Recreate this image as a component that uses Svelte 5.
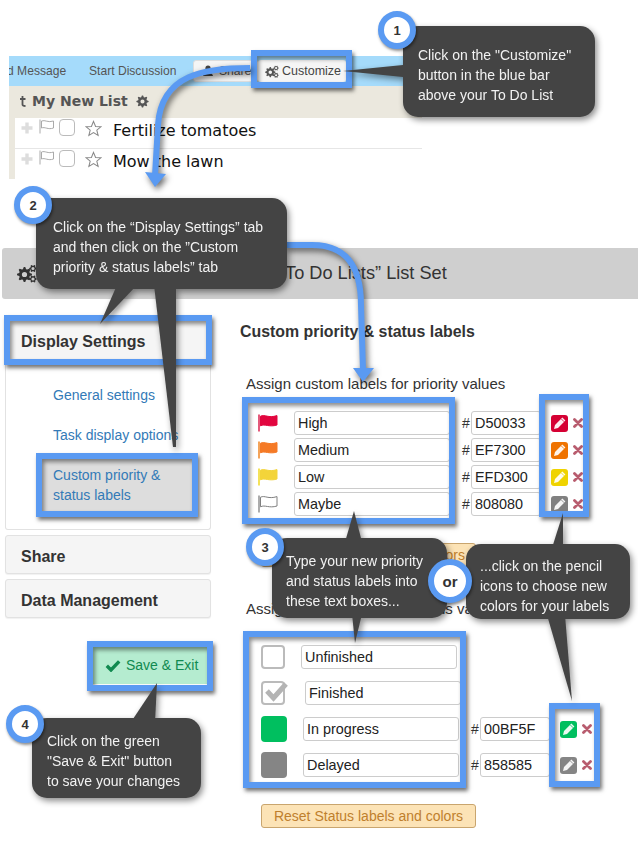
<script>
	const priorities = [
		{ label: 'High', hex: 'D50033', color: '#d50033', fill: '#e2063f' },
		{ label: 'Medium', hex: 'EF7300', color: '#ef7300', fill: '#f57a26' },
		{ label: 'Low', hex: 'EFD300', color: '#efd300', fill: '#f3d43a' },
		{ label: 'Maybe', hex: '808080', color: '#808080', fill: 'none' }
	];
	const statuses = [
		{ label: 'Unfinished', kind: 'empty', shift: 'none' },
		{ label: 'Finished', kind: 'done', shift: 'far' },
		{ label: 'In progress', kind: 'green', shift: 'near', hex: '00BF5F', color: '#00bf5f' },
		{ label: 'Delayed', kind: 'gray', shift: 'near', hex: '858585', color: '#858585' }
	];
	const notes = [
		{ id: 'n1', lines: ['Click on the "Customize"', 'button in the blue bar', 'above your To Do List'] },
		{ id: 'n2', lines: ['Click on the “Display Settings” tab', 'and then click on the ”Custom', 'priority & status labels” tab'] },
		{ id: 'n3', lines: ['Type your new priority', 'and status labels into', 'these text boxes...'] },
		{ id: 'n3b', lines: ['...click on the pencil', 'icons to choose new', 'colors for your labels'] },
		{ id: 'n4', lines: ['Click on the green', '"Save & Exit" button', 'to save your changes'] }
	];
	const tails = [
		'403,65 403,77 343,71',
		'117,285 100,324 137,285',
		'154,285 173,447 176,447 176,285',
		'354,511 345,542 362,542',
		'352,614 362,614 355,643',
		'563,513 552,548 563,548',
		'547,615 565,615 572,701',
		'157,683 131,722 155,722'
	];

	// toothed wheel with a hole, used for the cog icons
	function gear(cx, cy, r, teeth, hole) {
		let d = '';
		const n = teeth * 4;
		for (let i = 0; i < n; i++) {
			const a = ((i - 0.5) / n) * Math.PI * 2;
			const rad = i % 4 < 2 ? r : r * 0.74;
			d += (i ? 'L' : 'M') + (cx + Math.cos(a) * rad).toFixed(2) + ' ' + (cy + Math.sin(a) * rad).toFixed(2);
		}
		d += 'Z';
		d += `M${cx - hole} ${cy}a${hole} ${hole} 0 1 0 ${hole * 2} 0a${hole} ${hole} 0 1 0 ${-hole * 2} 0Z`;
		return d;
	}
</script>

{#snippet cogs(cls)}
	<svg class={cls} viewBox="0 0 20 19">
		<path fill="currentColor" fill-rule="evenodd" d={gear(7.5, 10.5, 7.5, 8, 2.6)} />
		<path fill="currentColor" fill-rule="evenodd" d={gear(16, 4.5, 3.8, 6, 1.6)} />
		<path fill="currentColor" fill-rule="evenodd" d={gear(16, 15, 3.8, 6, 1.6)} />
	</svg>
{/snippet}

{#snippet star()}
	<svg class="star" viewBox="0 0 18 18">
		<polygon points="9,1.5 11.2,6.8 16.8,7.2 12.5,10.8 13.9,16.3 9,13.3 4.1,16.3 5.5,10.8 1.2,7.2 6.8,6.8" fill="#fff" stroke="#888" stroke-width="1.1" />
	</svg>
{/snippet}

{#snippet tool(color)}
	<span class="pencil" style="background: {color}">
		<svg viewBox="0 0 14 14">
			<path d="M1 13 L2 9 L9.4 1.6 L12.4 4.6 L5 12 Z" fill="#fff" fill-opacity="0.92" />
			<path d="M8.2 2.8 L11.2 5.8" stroke={color} stroke-width="0.8" />
		</svg>
	</span>
	<svg class="cross" viewBox="0 0 10 10">
		<path d="M1.5 1.5 L8.5 8.5 M8.5 1.5 L1.5 8.5" stroke="#b85c6e" stroke-width="2.8" stroke-linecap="round" />
	</svg>
{/snippet}

<div class="canvas">
	<section class="shot">
		<div class="bluebar">
			<span class="cut">d Message</span>
			<span class="start">Start Discussion</span>
			<span class="pill share">
				<svg viewBox="0 0 12 12"><circle cx="6" cy="3.2" r="2.6" fill="#444" /><path d="M1 11 C1 6.5 11 6.5 11 11 Z" fill="#444" /></svg>
				Share
			</span>
			<span class="pill custom">{@render cogs('cog-small')} Customize</span>
		</div>
		<div class="listhead">
			<svg class="sort" viewBox="0 0 8 12"><path d="M3.5 1 V9.5 Q3.5 11 6.5 11 M1 4 H6.5" fill="none" stroke="#555" stroke-width="1.8" /></svg>
			<b>My New List</b>
			<svg class="cog-title" viewBox="0 0 14 14"><path fill="#555" fill-rule="evenodd" d={gear(7, 7, 6.6, 8, 2.2)} /></svg>
		</div>
		{#each ['Fertilize tomatoes', 'Mow the lawn'] as task}
			<div class="task">
				<svg class="plus" viewBox="0 0 12 12"><path d="M6 0.5 V11.5 M0.5 6 H11.5" stroke="#ddd" stroke-width="3.4" /></svg>
				<svg class="miniflag" viewBox="0 0 16 15"><path d="M1 0.5 V14.5 M2.5 2 C6 0.5 9 4 14.5 2 V9 C9 11 6 7.5 2.5 9 Z" fill="none" stroke="#aaa" /></svg>
				<span class="tick"></span>
				{@render star()}
				<span class="taskname">{task}</span>
			</div>
		{/each}
	</section>

	<header class="bar">
		{@render cogs('cog-head')}
		<h1>“To Do Lists” List Set</h1>
	</header>

	<div class="body">
		<aside class="side">
			<div class="tab">Display Settings</div>
			<nav class="tabbody">
				<a href="#general">General settings</a>
				<a href="#task">Task display options</a>
				<a class="active" href="#custom">Custom priority &amp; status labels</a>
			</nav>
			<div class="tab closed">Share</div>
			<div class="tab closed">Data Management</div>
			<button class="save">
				<svg viewBox="0 0 16 13"><path d="M1.8 6.8 L6 11 L14.2 2.3" fill="none" stroke="#118a50" stroke-width="3.4" /></svg>
				Save &amp; Exit
			</button>
		</aside>

		<main class="content">
			<h2>Custom priority &amp; status labels</h2>
			<p class="assign first">Assign custom labels for priority values</p>
			<div class="rows priority">
				{#each priorities as p}
					<div class="row">
						<svg class="flag" viewBox="0 0 20 18">
							<path d="M1 0.5 V17.5" stroke={p.color} stroke-width="1.3" />
							<path d="M2.5 2.2 C7 0 10 4.5 19 1.6 V11 C11 13.5 7 9.5 2.5 11.8 Z" fill={p.fill} stroke={p.fill === 'none' ? p.color : p.fill} />
						</svg>
						<input class="name" value={p.label} />
						<span class="hash">#</span>
						<input class="hex" value={p.hex} />
						{@render tool(p.color)}
					</div>
				{/each}
			</div>
			<button class="reset">Reset Priority labels and colors</button>

			<p class="assign second">Assign custom labels for status values</p>
			<div class="rows status">
				{#each statuses as s}
					<div class="row">
						<span class="box {s.kind}">
							{#if s.kind === 'done'}
								<svg viewBox="0 0 28 24"><path d="M6 11 L12.5 18 L25 4" fill="none" stroke="#b4b4b4" stroke-width="5" /></svg>
							{/if}
						</span>
						<input class="name {s.shift}" value={s.label} />
						{#if s.hex}
							<span class="hash">#</span>
							<input class="hex" value={s.hex} />
							{@render tool(s.color)}
						{/if}
					</div>
				{/each}
			</div>
			<button class="reset">Reset Status labels and colors</button>
		</main>
	</div>

	<div class="ring r-custom"></div>
	<div class="ring r-display"></div>
	<div class="ring r-labels"></div>
	<div class="ring r-names"></div>
	<div class="ring r-tools"></div>
	<div class="ring r-status"></div>
	<div class="ring r-tools2"></div>
	<div class="ring r-save"></div>

	<svg class="overlay arrows" viewBox="0 0 638 853">
		<path d="M250 68 C205 68 161 74 158 125 L155 176" />
		<polygon points="145,172 166,174 155,187" />
		<path d="M285 245 L312 245 C345 245 361 265 361 305 L363 370" />
		<polygon points="353,368 374,368 363,382" />
	</svg>

	<div class="notes">
		<svg class="overlay" viewBox="0 0 638 853">
			{#each tails as points}
				<polygon {points} fill="#444" />
			{/each}
		</svg>
		{#each notes as note}
			<div class="note {note.id}">
				{#each note.lines as line}
					<div>{line}</div>
				{/each}
			</div>
		{/each}
	</div>

	<span class="badge b1">1</span>
	<span class="badge b2">2</span>
	<span class="badge b3">3</span>
	<span class="badge b4">4</span>
	<span class="badge or">or</span>
</div>

<style>
	:global(body) {
		margin: 0;
		background: #fff;
	}
	.canvas {
		position: relative;
		width: 638px;
		height: 853px;
		overflow: hidden;
		font-family: 'Liberation Sans', Arial, sans-serif;
		font-size: 14px;
		color: #333;
		background: #fff;
	}
	.overlay {
		position: absolute;
		left: 0;
		top: 0;
		width: 638px;
		height: 853px;
	}

	/* pasted list screenshot */
	.shot {
		width: 413px;
		height: 123px;
		margin: 56px 0 0 9px;
		background: #ebe8de;
		overflow: hidden;
	}
	.bluebar {
		height: 30px;
		background: #a5dbfb;
		display: flex;
		align-items: center;
		font-size: 12.1px;
		color: #555;
	}
	.cut {
		width: 82px;
		margin-left: -2px;
		flex: none;
	}
	.start {
		width: 104px;
		flex: none;
	}
	.pill {
		display: flex;
		align-items: center;
		height: 22px;
		border-radius: 3px;
		background: #f5f5f5;
		color: #555;
	}
	.share {
		width: 66px;
		gap: 5px;
		padding-left: 8px;
		box-sizing: border-box;
		border: 1px solid #ddd;
	}
	.share svg {
		width: 12px;
		height: 12px;
	}
	.custom {
		padding-left: 7px;
		gap: 3px;
		width: 88px;
		margin-left: -1px;
		box-sizing: border-box;
		color: #444;
		font-size: 12.5px;
	}
	:global(.cog-small) {
		width: 14px;
		height: 13px;
		color: #555;
	}
	.listhead {
		height: 30px;
		padding: 0 0 2px 10px;
		display: flex;
		align-items: center;
		font-family: 'DejaVu Sans', Verdana, sans-serif;
		font-size: 14px;
		color: #555;
	}
	.sort {
		width: 8px;
		height: 12px;
		margin-right: 5px;
	}
	.cog-title {
		width: 13px;
		height: 13px;
		margin-left: 8px;
	}
	.task {
		height: 30px;
		margin-left: 6px;
		background: #fff;
		border-bottom: 1px solid #e6e6e6;
		display: flex;
		align-items: flex-start;
	}
	.plus {
		width: 12px;
		height: 12px;
		margin: 4px 0 0 6px;
	}
	.miniflag {
		width: 16px;
		height: 15px;
		margin: 1px 0 0 6px;
	}
	.tick {
		width: 14px;
		height: 15px;
		margin: 1px 0 0 4px;
		border: 1px solid #bbb;
		border-radius: 4px;
	}
	.star {
		width: 17px;
		height: 17px;
		margin: 2px 0 0 10px;
	}
	.taskname {
		margin-left: 11px;
		margin-top: 4px;
		font-family: 'DejaVu Sans', Verdana, sans-serif;
		font-size: 16px;
		line-height: 18px;
		color: #111;
	}

	/* settings page */
	.bar {
		height: 51px;
		margin: 69px 0 0 2px;
		background: #cfcfcf;
		border-radius: 3px 0 0 3px;
		display: flex;
		align-items: center;
	}
	:global(.cog-head) {
		width: 20px;
		height: 19px;
		margin-left: 15px;
		color: #333;
	}
	h1 {
		margin: 0 0 0 242px;
		font-size: 18.2px;
		font-weight: 400;
		color: #333;
		white-space: nowrap;
	}
	.body {
		display: flex;
	}
	.side {
		width: 206px;
		margin-left: 5px;
		padding-top: 21px;
		flex: none;
	}
	.tab {
		height: 40px;
		line-height: 43px;
		padding-left: 16px;
		font-size: 16px;
		font-weight: 700;
		background: #f5f5f5;
		box-sizing: border-box;
	}
	.tab.closed {
		height: 39px;
		line-height: 41px;
		margin-top: 5px;
		border: 1px solid #e2e2e2;
		border-radius: 3px;
		padding-left: 15px;
		box-shadow: 0 1px 1px rgba(0, 0, 0, 0.06);
	}
	.tabbody {
		height: 170px;
		box-sizing: border-box;
		border: 1px solid #e2e2e2;
		border-top: 0;
		border-radius: 0 0 3px 3px;
		padding: 25px 0 0 36px;
	}
	.tabbody a {
		display: block;
		width: 150px;
		line-height: 20px;
		box-sizing: border-box;
		padding-left: 11px;
		margin-bottom: 20px;
		color: #337ab7;
		text-decoration: none;
		white-space: nowrap;
	}
	.tabbody a.active {
		background: #ddd;
		white-space: normal;
		padding: 6px 20px 6px 11px;
		margin-top: -6px;
	}
	.save {
		display: flex;
		align-items: center;
		gap: 5px;
		width: 114px;
		height: 38px;
		margin: 28px 0 0 88px;
		padding: 0 0 0 12px;
		border: 0;
		background: #b5ecd0;
		color: #118a50;
		font: 14px 'Liberation Sans', Arial, sans-serif;
		white-space: nowrap;
	}
	.save svg {
		width: 16px;
		height: 13px;
	}
	.content {
		margin-left: 29px;
		flex: 1;
	}
	h2 {
		margin: 23px 0 0;
		font-size: 15.9px;
		line-height: 20px;
		font-weight: 700;
		color: #333;
	}
	.assign {
		margin: 0 0 0 6px;
		line-height: 20px;
		font-size: 15px;
	}
	.assign.first {
		margin-top: 32px;
	}
	.assign.second {
		margin-top: 32px;
	}
	.rows {
		display: grid;
		margin-left: 18px;
	}
	.rows.priority {
		margin-top: 17px;
		grid-auto-rows: 24px;
		row-gap: 3px;
	}
	.rows.status {
		margin: 26px 0 0 21px;
		grid-auto-rows: 24px;
		row-gap: 12px;
	}
	.row {
		display: flex;
		align-items: center;
		height: 24px;
	}
	.flag {
		width: 20px;
		height: 18px;
		margin-right: 16px;
		flex: none;
	}
	input {
		height: 24px;
		box-sizing: border-box;
		border: 1px solid #ccc;
		border-radius: 3px;
		background: #fff;
		padding: 0 3px;
		font: 14.4px 'Liberation Sans', Arial, sans-serif;
		color: #222;
		flex: none;
	}
	.name {
		width: 156px;
	}
	.name.far {
		margin-left: 4px;
	}
	.name.near {
		margin-left: 2px;
	}
	.hash {
		width: 9px;
		margin-left: 12px;
		flex: none;
		font-size: 14px;
	}
	.hex {
		width: 70px;
	}
	.pencil {
		display: flex;
		align-items: center;
		justify-content: center;
		width: 17px;
		height: 17px;
		margin-left: 10px;
		border-radius: 3px;
		flex: none;
	}
	.pencil svg {
		width: 14px;
		height: 14px;
	}
	.cross {
		width: 10px;
		height: 10px;
		margin-left: 5px;
		flex: none;
	}
	.box {
		width: 24px;
		height: 24px;
		margin-right: 16px;
		box-sizing: border-box;
		border-radius: 4px;
		flex: none;
		position: relative;
	}
	.box.empty,
	.box.done {
		border: 2px solid #bbb;
	}
	.box.done svg {
		position: absolute;
		left: -2px;
		top: -3px;
		width: 28px;
		height: 24px;
	}
	.box.green {
		width: 26px;
		height: 26px;
		margin-right: 14px;
		background: #00bf5f;
	}
	.box.gray {
		width: 26px;
		height: 26px;
		margin-right: 14px;
		background: #858585;
	}
	.reset {
		display: block;
		width: 215px;
		height: 24px;
		margin: 27px 0 0 21px;
		padding: 0;
		box-sizing: border-box;
		border: 1px solid #c9a56e;
		border-radius: 3px;
		background: #fce3b6;
		color: #bf7f2d;
		font: 14px 'Liberation Sans', Arial, sans-serif;
	}

	/* annotations */
	.ring {
		position: absolute;
		box-sizing: border-box;
		border: 6px solid #5a9af2;
		box-shadow: 2px 3px 4px rgba(0, 0, 0, 0.55), inset 2px 3px 4px rgba(0, 0, 0, 0.45);
	}
	.r-custom { left: 251px; top: 50px; width: 101px; height: 38px; }
	.r-display { left: 4px; top: 315px; width: 208px; height: 50px; }
	.r-labels { left: 36px; top: 453px; width: 162px; height: 64px; }
	.r-names { left: 242px; top: 397px; width: 213px; height: 127px; }
	.r-tools { left: 539px; top: 394px; width: 50px; height: 123px; }
	.r-status { left: 243px; top: 631px; width: 223px; height: 157px; }
	.r-tools2 { left: 549px; top: 703px; width: 51px; height: 84px; }
	.r-save { left: 87px; top: 641px; width: 126px; height: 50px; }

	.arrows {
		filter: drop-shadow(2px 3px 3px rgba(0, 0, 0, 0.6));
	}
	.arrows path {
		fill: none;
		stroke: #5a9af2;
		stroke-width: 6;
	}
	.arrows polygon {
		fill: #5a9af2;
	}
	.notes {
		position: absolute;
		left: 0;
		top: 0;
		width: 638px;
		height: 853px;
		filter: drop-shadow(2px 3px 3px rgba(0, 0, 0, 0.45));
	}
	.note {
		position: absolute;
		box-sizing: border-box;
		background: #444;
		color: #f2f2f2;
		border-radius: 15px;
		font-size: 14px;
		line-height: 20px;
		white-space: nowrap;
	}
	.n1 { left: 403px; top: 26px; width: 192px; height: 91px; padding: 19px 0 0 15px; }
	.n2 { left: 36px; top: 198px; width: 251px; height: 91px; padding: 19px 0 0 17px; }
	.n3 { left: 272px; top: 538px; width: 175px; height: 80px; padding: 13px 0 0 14px; }
	.n3b { left: 466px; top: 544px; width: 164px; height: 75px; padding: 12px 0 0 14px; }
	.n4 { left: 32px; top: 718px; width: 169px; height: 80px; padding: 13px 0 0 15px; }

	.badge {
		position: absolute;
		box-sizing: border-box;
		width: 38px;
		height: 38px;
		border: 6px solid #5a9af2;
		border-radius: 50%;
		background: #fff;
		display: flex;
		align-items: center;
		justify-content: center;
		font-size: 13px;
		font-weight: 700;
		color: #333;
		box-shadow: 1px 2px 3px rgba(0, 0, 0, 0.45);
	}
	.b1 { left: 378px; top: 11px; }
	.b2 { left: 14px; top: 186px; }
	.b3 { left: 246px; top: 528px; }
	.b4 { left: 6px; top: 705px; }
	.or {
		left: 428px;
		top: 559px;
		width: 44px;
		height: 44px;
		font-size: 15px;
	}
</style>
